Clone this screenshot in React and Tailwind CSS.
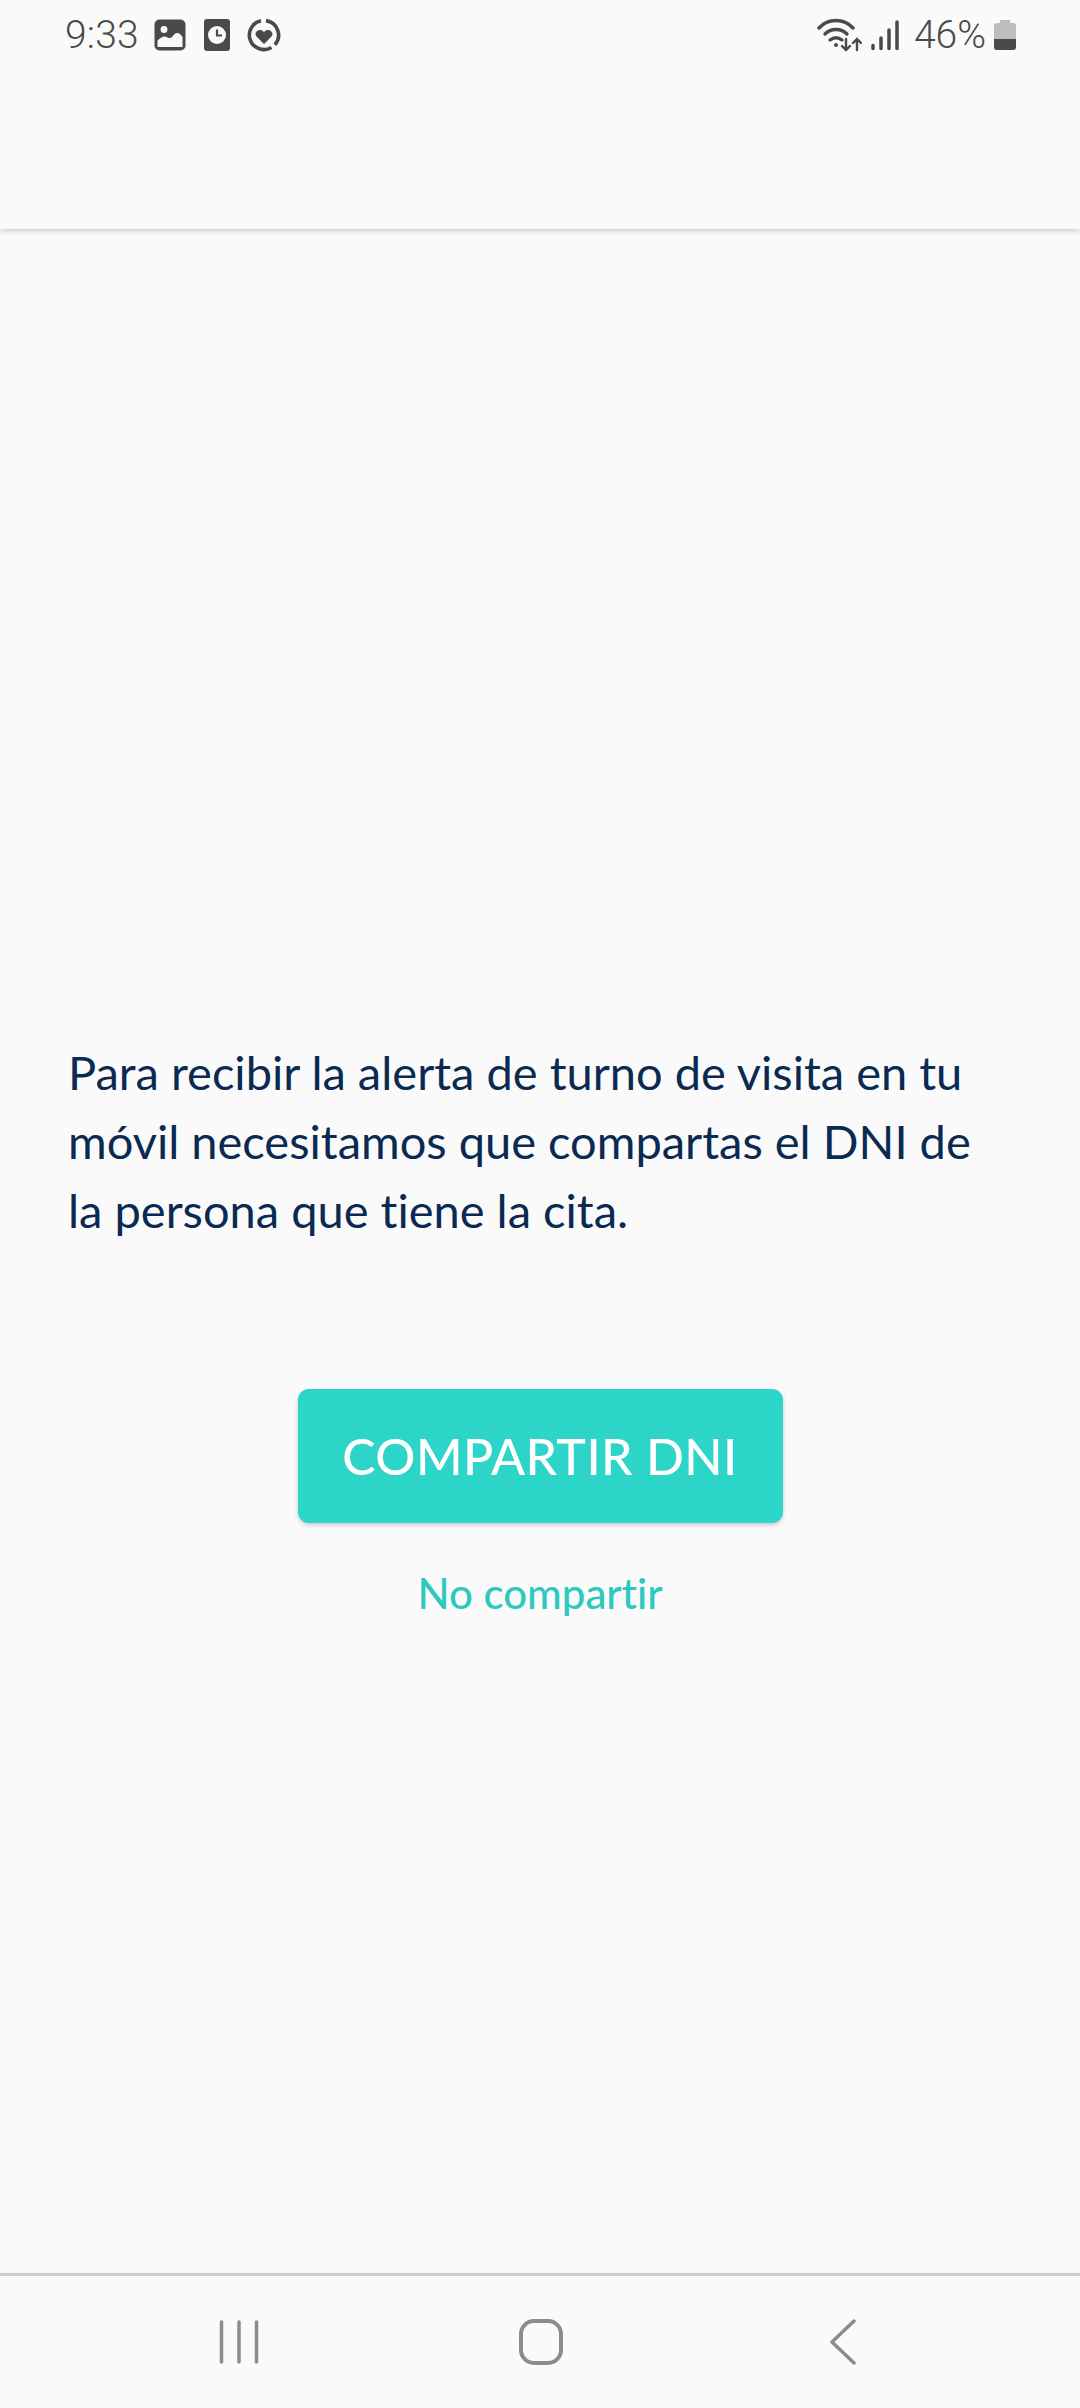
import React from 'react';

function StatusBar() {
  return (
    <div className="flex h-[70px] items-center justify-between pl-[65px] pr-[64px] text-[#4a4a4a]">
      <div className="flex items-center">
        <span className="text-[39px] font-['Roboto',sans-serif] font-light tracking-[0.2px] leading-none">9:33</span>
        <svg className="ml-[15px]" width="32" height="32" viewBox="0 0 32 32">
          <rect x="0.500" y="0.500" width="31" height="31" rx="5" fill="#4a4a4a" />
          <circle cx="10" cy="10.500" r="3.400" fill="#fafafa" />
          <path d="M3.500 28v-6.500c2-2 5-4 7-4 2.500 0 3 2 5.500 1.500 3-.5 4-5 7-5 2.500 0 4 2 5.500 4V28z" fill="#fafafa" />
        </svg>
        <svg className="ml-[17px]" width="28" height="34" viewBox="0 0 28 34">
          <rect x="1" y="1" width="26" height="32" rx="3" fill="#4a4a4a" />
          <circle cx="14" cy="17" r="9" fill="#fafafa" />
          <path d="M14 11.500v6h5" fill="none" stroke="#4a4a4a" strokeWidth="2.200" />
        </svg>
        <svg className="ml-[16px]" width="34" height="34" viewBox="0 0 34 34">
          <path d="M19 2.600A14.600 14.600 0 0 1 27.800 26.800" fill="none" stroke="#4a4a4a" strokeWidth="3.600" />
          <path d="M24.500 29.500A14.600 14.600 0 1 1 14 2.700" fill="none" stroke="#4a4a4a" strokeWidth="3.600" />
          <path d="M17 26l-7.500-7.500c-3.500-4.500 3.500-9.500 7.500-4.500 4-5 11-0 7.500 4.500z" fill="#4a4a4a" />
        </svg>
      </div>
      <div className="flex items-center">
        <svg width="45" height="34" viewBox="0 0 45 34" fill="none" stroke="#4a4a4a" strokeLinecap="round">
          <path d="M2 10C11 0 27 0 36 10" strokeWidth="3.400" />
          <path d="M8 16c6-6 16-6 22 0" strokeWidth="3.400" />
          <path d="M13 22c4-3 8-3 12 0" strokeWidth="3.400" />
          <circle cx="19" cy="27" r="2" fill="#4a4a4a" stroke="none" />
          <path d="M29 21v11M25 28l4 4 4-4M40 32V21M36 25l4-4 4 4" strokeWidth="2.400" />
        </svg>
        <svg className="ml-[9px]" width="28" height="32" viewBox="0 0 28 32" stroke="#4a4a4a" strokeWidth="3.500" strokeLinecap="round">
          <path d="M2 29.500v-3M10 29.500V19M18 29.500V11M26 29.500V3" />
        </svg>
        <span className="ml-[15px] text-[39px] font-['Roboto',sans-serif] font-light leading-none">46%</span>
        <svg className="ml-[8px]" width="22" height="32" viewBox="0 0 22 32">
          <path d="M6 1h10v3h3a3 3 0 0 1 3 3v21a3 3 0 0 1-3 3H3a3 3 0 0 1-3-3V7a3 3 0 0 1 3-3h3z" fill="#bdbdbd" />
          <path d="M0 20h22v8a3 3 0 0 1-3 3H3a3 3 0 0 1-3-3z" fill="#4a4a4a" />
        </svg>
      </div>
    </div>
  );
}

function NavBar() {
  return (
    <div className="border-t-[3px] border-[#cdcdcd] h-[135px] flex items-center pl-[219px]">
      <svg width="40" height="44" viewBox="0 0 40 44" stroke="#8c8c8c" strokeWidth="3.500" strokeLinecap="round">
        <path d="M2.500 2v40M20 2v40M37.500 2v40" />
      </svg>
      <svg className="ml-[260px]" width="44" height="46" viewBox="0 0 44 46" fill="none" stroke="#8c8c8c" strokeWidth="4">
        <rect x="2" y="2" width="40" height="42" rx="13" />
      </svg>
      <svg className="ml-[266px]" width="28" height="46" viewBox="0 0 28 46" fill="none" stroke="#8c8c8c" strokeWidth="3.500" strokeLinecap="round" strokeLinejoin="round">
        <path d="M25 2L3 23l22 21" />
      </svg>
    </div>
  );
}

export default function App() {
  return (
    <div className="flex flex-col h-[2408px] w-[1080px] bg-[#fafafa] overflow-hidden">
      <div className="h-[229px] shadow-[0_2px_6px_rgba(0,0,0,0.18)] relative">
        <StatusBar />
      </div>
      <div className="flex-1 flex flex-col">
        <p className="mt-[809px] px-[68px] text-[47px] leading-[69px] text-[#0a2a52] font-['Lato',sans-serif] [font-variant-ligatures:none]">
          Para recibir la alerta de turno de visita en tu móvil necesitamos que compartas el DNI de la persona que tiene la cita.
        </p>
        <button className="mt-[144px] self-center w-[485px] h-[134px] rounded-[11px] bg-[#2dd4c8] shadow-[0_2px_4px_rgba(0,0,0,0.2)] text-white text-[50px] tracking-[0.4px] font-['Lato',sans-serif] font-medium">
          COMPARTIR DNI
        </button>
        <button className="mt-[45px] self-center text-[#2dc9bf] text-[42px] leading-[50px] font-['Lato',sans-serif] font-medium [font-variant-ligatures:none]">
          No compartir
        </button>
      </div>
      <NavBar />
    </div>
  );
}
